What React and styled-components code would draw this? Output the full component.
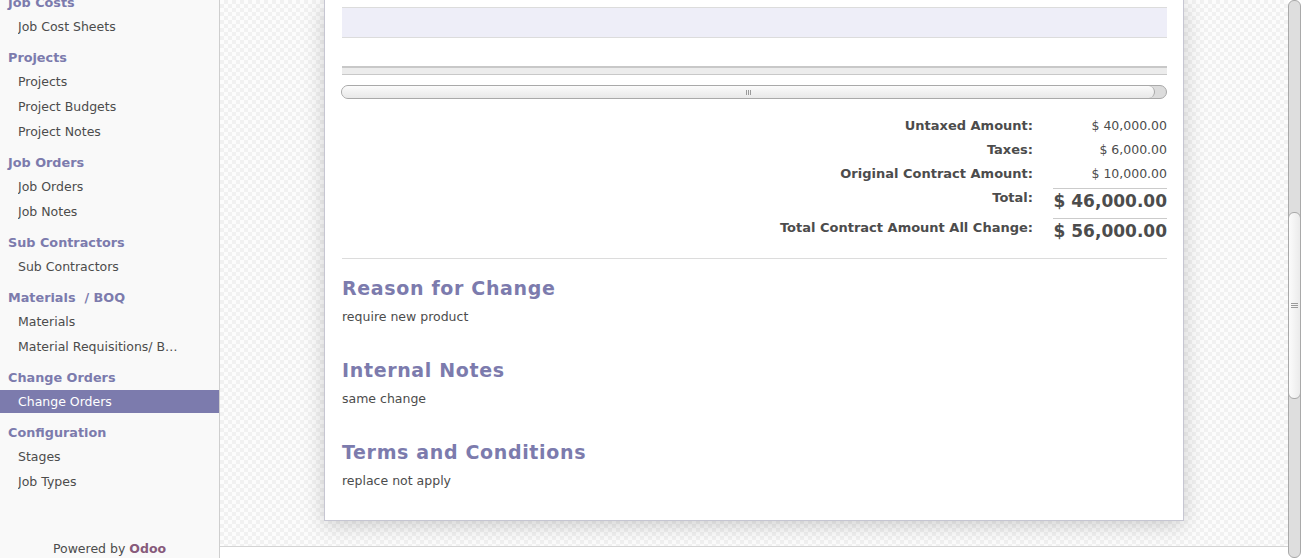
import React from 'react';
import styled, { createGlobalStyle } from 'styled-components';

const GlobalStyle = createGlobalStyle`
  html, body {
    margin: 0;
    padding: 0;
    height: 100%;
    overflow: hidden;
  }
  body {
    font-family: "DejaVu Sans", Verdana, sans-serif;
    font-size: 12.5px;
    color: #4c4c4c;
    background: #fff;
  }
`;

const menu = [
  { title: 'Job Costs', items: ['Job Cost Sheets'] },
  { title: 'Projects', items: ['Projects', 'Project Budgets', 'Project Notes'] },
  { title: 'Job Orders', items: ['Job Orders', 'Job Notes'] },
  { title: 'Sub Contractors', items: ['Sub Contractors'] },
  { title: 'Materials  / BOQ', items: ['Materials', 'Material Requisitions/ BOQ'] },
  { title: 'Change Orders', items: ['Change Orders'], active: 0 },
  { title: 'Configuration', items: ['Stages', 'Job Types'] },
];

const totals = [
  { label: 'Untaxed Amount:', value: '$ 40,000.00' },
  { label: 'Taxes:', value: '$ 6,000.00' },
  { label: 'Original Contract Amount:', value: '$ 10,000.00' },
];

const notes = [
  { title: 'Reason for Change', text: 'require new product' },
  { title: 'Internal Notes', text: 'same change' },
  { title: 'Terms and Conditions', text: 'replace not apply' },
];

const App = () => {
  return (
    <Page>
      <GlobalStyle />
      <Sidebar>
        <Menu>
          {menu.map((group) => (
            <React.Fragment key={group.title}>
              <MenuHeader>{group.title}</MenuHeader>
              {group.items.map((item, i) => (
                <MenuItem key={item} $active={group.active === i}>
                  <span>{item}</span>
                </MenuItem>
              ))}
            </React.Fragment>
          ))}
        </Menu>
        <Powered>
          Powered by <b>Odoo</b>
        </Powered>
      </Sidebar>

      <Main>
        <Content>
          <Canvas>
            <Sheet>
              <LineRow />
              <TableFoot />
              <HScroll>
                <HThumb>
                  <Grip $horizontal />
                </HThumb>
              </HScroll>

              <Totals>
                {totals.map((row) => (
                  <React.Fragment key={row.label}>
                    <TotalLabel>{row.label}</TotalLabel>
                    <TotalValue>{row.value}</TotalValue>
                  </React.Fragment>
                ))}
                <TotalLabel $big $gap={2}>Total:</TotalLabel>
                <TotalValue $big $gap={2}>$ 46,000.00</TotalValue>
                <TotalLabel $big $gap={5}>Total Contract Amount All Change:</TotalLabel>
                <TotalValue $big $gap={5}>$ 56,000.00</TotalValue>
              </Totals>

              <Divider />

              {notes.map((note, i) => (
                <NoteBlock key={note.title} $first={i === 0}>
                  <NoteTitle>{note.title}</NoteTitle>
                  <NoteText>{note.text}</NoteText>
                </NoteBlock>
              ))}
            </Sheet>
          </Canvas>
          <BottomBar />
        </Content>

        <VScroll>
          <VThumb>
            <Grip />
          </VThumb>
        </VScroll>
      </Main>
    </Page>
  );
};

export default App;


const Page = styled.div`
  display: flex;
  height: 100vh;
  overflow: hidden;
`;

const Sidebar = styled.aside`
  width: 219px;
  flex-shrink: 0;
  display: flex;
  flex-direction: column;
  background: #f9f9f9;
  border-right: 1px solid #cfcfcf;
  overflow: hidden;
`;

const Menu = styled.ul`
  list-style: none;
  display: flex;
  flex-direction: column;
  margin: -15px 0 0 0;
  padding: 0;
`;

const MenuHeader = styled.li`
  height: 21px;
  line-height: 21px;
  margin: 7px 0 2px 0;
  padding-left: 8px;
  font-size: 12.8px;
  font-weight: bold;
  color: #7c7bad;
  white-space: pre;
`;

const MenuItem = styled.li`
  height: 23px;
  line-height: 23px;
  margin-bottom: 2px;
  padding: 0 38px 0 18px;
  white-space: nowrap;
  color: ${(p) => (p.$active ? '#fff' : '#4c4c4c')};
  background: ${(p) => (p.$active ? '#7c7bad' : 'transparent')};

  span {
    display: block;
    overflow: hidden;
    text-overflow: ellipsis;
  }
`;

const Powered = styled.div`
  margin-top: auto;
  height: 18px;
  line-height: 18px;
  text-align: center;

  b {
    color: #875a7b;
    font-weight: bold;
  }
`;

const Main = styled.div`
  flex: 1;
  display: flex;
  min-width: 0;
`;

const Content = styled.div`
  flex: 1;
  display: flex;
  flex-direction: column;
  min-width: 0;
`;

const Canvas = styled.div`
  flex: 1;
  overflow: hidden;
  background: repeating-conic-gradient(#f1f1f1 0 25%, #fcfcfc 0 50%) 0 0 / 8px 8px;
`;

const BottomBar = styled.div`
  height: 11px;
  border-top: 1px solid #d4d4d4;
  background: #fff;
`;

const Sheet = styled.div`
  box-sizing: border-box;
  width: 860px;
  margin: 0 auto;
  padding: 7px 16px 30px 17px;
  background: #fff;
  border: 1px solid #c6c6d2;
  border-top: none;
  box-shadow: 0 4px 20px rgba(0, 0, 0, 0.18);
`;

const LineRow = styled.div`
  height: 29px;
  background: #eeeef8;
  border-top: 1px solid #dcdcdc;
  border-bottom: 1px solid #dcdcdc;
`;

const TableFoot = styled.div`
  margin-top: 28px;
  height: 6px;
  background: #ececec;
  border-top: 2px solid #c8c8c8;
  border-bottom: 1px solid #c8c8c8;
`;

const HScroll = styled.div`
  box-sizing: border-box;
  margin: 10px 0 0 -1px;
  height: 14px;
  border: 1px solid #a9a9a9;
  border-radius: 7px;
  background: #dcdcdc;
  display: flex;
  padding-right: 11px;
`;

const HThumb = styled.div`
  flex: 1;
  display: flex;
  align-items: center;
  justify-content: center;
  border-radius: 6px;
  border-right: 1px solid #a9a9a9;
  background: linear-gradient(#fbfbfb, #e8e8e8);
`;

const Grip = styled.div`
  width: ${(p) => (p.$horizontal ? '5px' : '7px')};
  height: 5px;
  background: ${(p) =>
    p.$horizontal
      ? 'repeating-linear-gradient(90deg, #9a9a9a 0 1px, transparent 1px 2px)'
      : 'repeating-linear-gradient(180deg, #9a9a9a 0 1px, transparent 1px 2px)'};
`;

const Totals = styled.div`
  margin-top: 15px;
  display: grid;
  grid-template-columns: auto 114px;
  justify-content: end;
  column-gap: 20px;
`;

const TotalLabel = styled.div`
  text-align: right;
  font-size: 13px;
  font-weight: bold;
  height: ${(p) => (p.$big ? '25px' : '24px')};
  line-height: ${(p) => (p.$big ? '20px' : '24px')};
  margin-top: ${(p) => p.$gap || 0}px;
  white-space: nowrap;
`;

const TotalValue = styled.div`
  text-align: right;
  height: 24px;
  line-height: 24px;
  margin-top: ${(p) => p.$gap || 0}px;
  font-size: ${(p) => (p.$big ? '17px' : '12.5px')};
  font-weight: ${(p) => (p.$big ? 'bold' : 'normal')};
  border-top: ${(p) => (p.$big ? '1px solid #cbcbcb' : 'none')};
  white-space: nowrap;
`;

const Divider = styled.div`
  margin-top: 15px;
  border-top: 1px solid #dcdcdc;
`;

const NoteBlock = styled.div`
  margin-top: ${(p) => (p.$first ? '16px' : '31px')};
`;

const NoteTitle = styled.h3`
  margin: 0;
  height: 26px;
  line-height: 26px;
  font-size: 19px;
  font-weight: bold;
  letter-spacing: 0.65px;
  color: #7c7bad;
`;

const NoteText = styled.p`
  margin: 7px 0 0 0;
  height: 18px;
  line-height: 18px;
`;

const VScroll = styled.div`
  box-sizing: border-box;
  width: 13px;
  flex-shrink: 0;
  height: 100%;
  border: 1px solid #a9a9a9;
  border-radius: 6px;
  background: #dedede;
  padding-top: 211px;
`;

const VThumb = styled.div`
  box-sizing: border-box;
  height: 187px;
  margin: 0 -1px;
  border: 1px solid #a9a9a9;
  border-radius: 6px;
  background: linear-gradient(90deg, #fbfbfb, #ebebeb);
  display: flex;
  align-items: center;
  justify-content: center;
`;
